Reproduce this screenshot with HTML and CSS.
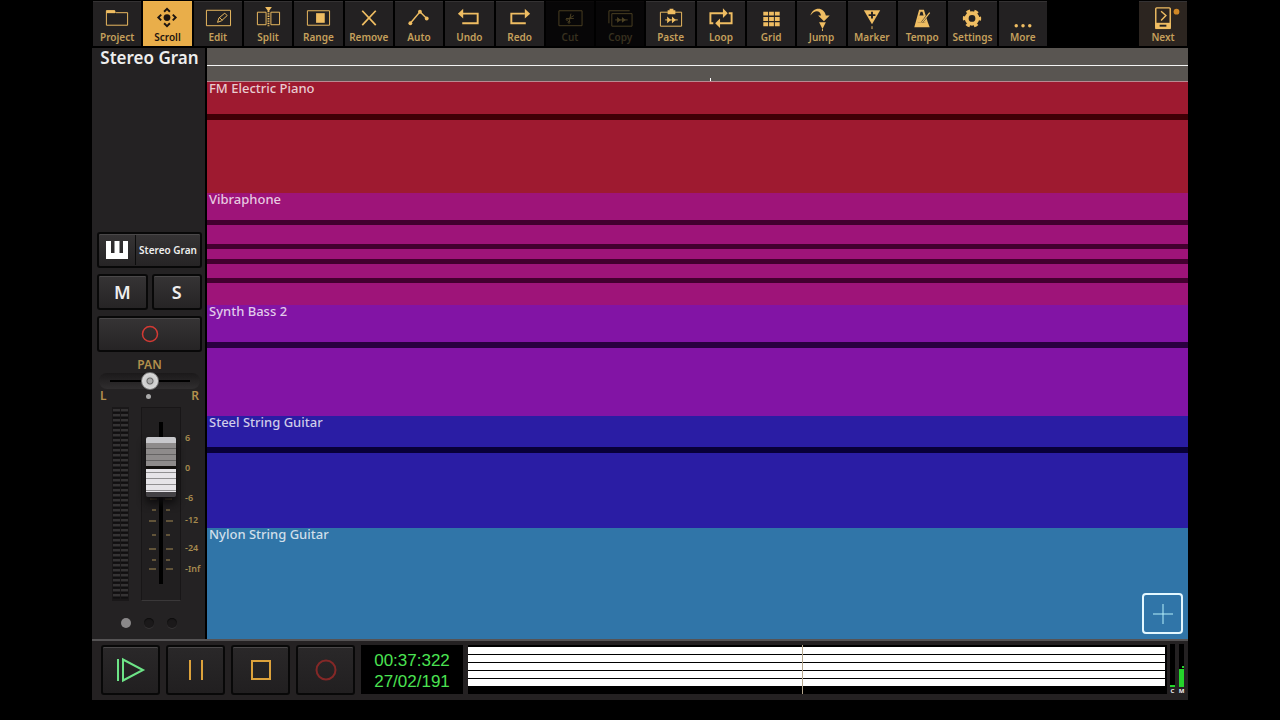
FILE: index.html
```html
<!DOCTYPE html>
<html lang="en">
<head>
	<meta charset="UTF-8">
	<meta name="viewport" content="width=device-width, initial-scale=1.0">
	<title>Audio Sequencer</title>
	<link rel="stylesheet" href="styles.css">
</head>
<body>
	<div class="app">
		<div class="toolbar">
			<div class="tools">
				<button class="tool"><svg viewBox="0 0 28 28"><path d="M3 22V7h8l2 2h12v13z"/><path d="M3 8h9" stroke-width="3"/></svg>Project</button>
				<button class="tool active"><svg viewBox="0 0 28 28"><circle class="fill" cx="14" cy="14" r="3.500"/><path d="M11 8l3-3 3 3M11 20l3 3 3-3M8 11l-3 3 3 3M20 11l3 3-3 3" stroke-width="2"/></svg>Scroll</button>
				<button class="tool"><svg viewBox="0 0 28 28"><path d="M2 6.500h25v16H2z"/><path d="M13.500 19l1.500-4.500 6-5 2.500 2.500-6 5.500zM15.500 14l3 3"/></svg>Edit</button>
				<button class="tool"><svg viewBox="0 0 28 28"><path d="M12 8.500H3v13h9zM17 8.500h9v13h-9z"/><path d="M14.500 7v16" stroke-width="2" stroke-dasharray="1.500 1"/><path class="fill" d="M11 3h7l-3.500 5z"/></svg>Split</button>
				<button class="tool"><svg viewBox="0 0 28 28"><path d="M3 7h23v15H3z"/><path class="fill" d="M12 9.500h9v10h-9z"/></svg>Range</button>
				<button class="tool"><svg viewBox="0 0 28 28"><path d="M7 7l14 15M21 7L7 22" stroke-width="1.800"/></svg>Remove</button>
				<button class="tool"><svg viewBox="0 0 28 28"><path d="M5 20L15 8l7 7" stroke-width="1.500"/><circle class="fill" cx="5" cy="20" r="2"/><circle class="fill" cx="15" cy="8" r="2"/><circle class="fill" cx="22" cy="15" r="2"/></svg>Auto</button>
				<button class="tool"><svg viewBox="0 0 28 28"><path d="M7 10h16v10H7" stroke-width="2"/><path class="fill" d="M2.500 10L8 5v10z"/></svg>Undo</button>
				<button class="tool"><svg viewBox="0 0 28 28"><path d="M19 10H5v10h15" stroke-width="2"/><path class="fill" d="M24.500 10L19 5v10z"/></svg>Redo</button>
				<button class="tool" disabled><svg viewBox="0 0 28 28"><path d="M2.500 7h24v15.500h-24z"/><path d="M10 15h8M15 10l-2 9M13 15l5-3"/><circle cx="11" cy="16" r="1"/><circle cx="13" cy="19" r="1"/></svg>Cut</button>
				<button class="tool" disabled><svg viewBox="0 0 28 28"><path d="M2.500 20V7H24M5.500 10h21v13h-21z"/><path d="M9 16.500h13"/><path class="fill" d="M11 13.500l4 3-4 3zM16 13.500l4 3-4 3z"/></svg>Copy</button>
				<button class="tool"><svg viewBox="0 0 28 28"><path d="M3 8.500h22v14.500H3z"/><path class="fill" d="M10.500 6.500h2V5h4v1.500h2v4h-8zM10 13l4 3.500-4 3.500zM15 13l4 3.500-4 3.500z"/><path d="M8 16.500h13"/></svg>Paste</button>
				<button class="tool"><svg viewBox="0 0 28 28"><path d="M6 20H3V9.500h14M22 9.500h3V20H12" stroke-width="2"/><path class="fill" d="M16 4.500l5 5-5 5zM13 15l-5 5 5 5z"/></svg>Loop</button>
				<button class="tool"><svg viewBox="0 0 28 28"><path class="fill" d="M6 8h5v4H6zM12 8h5v4h-5zM18 8h5v4h-5zM6 13.500h5v4H6zM12 13.500h5v4h-5zM18 13.500h5v4h-5zM6 19h5v4H6zM12 19h5v4h-5zM18 19h5v4h-5z"/></svg>Grid</button>
				<button class="tool"><svg viewBox="0 0 28 28"><path class="fill" d="M2 12C4 3 16 2 18 12h4l-6 6-6-6h3C12 6 6 6 2 12zM11 19h7l-3.500 7z"/><path d="M14.500 26v2"/></svg>Jump</button>
				<button class="tool"><svg viewBox="0 0 28 28"><path class="fill" d="M5.500 6.500h17L14 21z"/><path class="hole" d="M14 8v7M10.500 11.500h7"/><path d="M14 23v3"/></svg>Marker</button>
				<button class="tool"><svg viewBox="0 0 28 28"><path class="fill" fill-rule="evenodd" d="M11 6h5l4 13 2 5H6zM12.500 8L9.500 19h8L14.500 8z"/><path class="fill" d="M11 12h5l2 7H9z"/><path class="hole" d="M14 19l7-9"/><path d="M14 19l8-10" stroke-width="1.300"/></svg>Tempo</button>
				<button class="tool"><svg viewBox="0 0 28 28"><circle cx="14" cy="15" r="5.500" stroke-width="4"/><circle cx="14" cy="15" r="8" stroke-width="3" stroke-dasharray="4 4.380" stroke-dashoffset="2"/></svg>Settings</button>
				<button class="tool"><svg viewBox="0 0 28 28"><circle class="fill" cx="7" cy="22.500" r="1.800"/><circle class="fill" cx="14" cy="22.500" r="1.800"/><circle class="fill" cx="21" cy="22.500" r="1.800"/></svg>More</button>
			</div>
			<button class="tool next"><svg viewBox="0 0 28 28"><rect x="6.500" y="4" width="15" height="21" rx="1" stroke-width="1.500"/><path class="fill" d="M6 19.500h16V26H6z"/><path class="hole" d="M10.500 22.500h7"/><path d="M12 7.500l5 4.500-5 5" stroke-width="1.500"/><circle class="badge" cx="28" cy="8" r="3"/></svg>Next</button>
		</div>

		<div class="main">
			<div class="channel">
				<h1>Stereo Gran</h1>
				<div class="strip">
					<button class="btn instrument">
						<svg viewBox="0 0 22 18"><path d="M0 0h5v12h3.500V0h5v12H17V0h5v18H0z"/></svg>
						<span>Stereo Gran</span>
					</button>
					<div class="mute-solo">
						<button class="btn">M</button>
						<button class="btn">S</button>
					</div>
					<button class="btn" aria-label="Arm recording"><svg class="arm" viewBox="0 0 18 18"><circle cx="9" cy="9" r="7.500"/></svg></button>
				</div>
				<div class="pan">
					<label for="pan">PAN</label>
					<input type="range" id="pan" min="-50" max="50" value="0">
					<div class="pan-ends"><span>L</span><i></i><span>R</span></div>
				</div>
				<div class="levels">
					<div class="meter"><i></i><i></i></div>
					<div class="fader">
						<!-- tick marks -->
						<svg viewBox="0 0 40 194"><path d="M9 30h7M24 30h7M5 61h30M9 91h7M24 91h7M11 102h4M25 102h4M8 113h7M25 113h7M11 127h4M25 127h4M8 141h7M25 141h7M11 152h4M25 152h4M8 161h7M25 161h7"/></svg>
						<input type="range" id="volume" aria-label="Volume" min="0" max="100" value="85">
					</div>
					<svg class="scale" viewBox="0 0 20 194"><text x="1" y="34">6</text><text x="1" y="64">0</text><text x="1" y="94">-6</text><text x="1" y="116">-12</text><text x="1" y="144">-24</text><text x="1" y="165">-Inf</text></svg>
				</div>
				<div class="pages"><i class="on"></i><i></i><i></i></div>
			</div>

			<div class="arrange">
				<div class="ruler">
					<div class="ruler-top"></div>
					<div class="ruler-bottom"><i style="left: 51.300%"></i></div>
				</div>
				<div class="track red">FM Electric Piano
					<i style="top: 29%"></i>
				</div>
				<div class="track pink">Vibraphone
					<i style="top: 24%"></i>
					<i style="top: 45%"></i>
					<i style="top: 59%"></i>
					<i style="top: 76%"></i>
				</div>
				<div class="track purple">Synth Bass 2
					<i style="top: 33%"></i>
				</div>
				<div class="track indigo">Steel String Guitar
					<i style="top: 28%"></i>
				</div>
				<div class="track blue">Nylon String Guitar</div>
				<button class="add" aria-label="Add track"><svg viewBox="0 0 20 20"><path d="M10 0v20M0 10h20"/></svg></button>
			</div>
		</div>

		<div class="transport">
			<button class="btn play" aria-label="Play"><svg viewBox="0 0 30 30"><path d="M2 4v22M7 4.500v21L27 15z"/></svg></button>
			<button class="btn pause" aria-label="Pause"><svg viewBox="0 0 30 30"><path d="M9 5v20M21 5v20"/></svg></button>
			<button class="btn stop" aria-label="Stop"><svg viewBox="0 0 30 30"><path d="M6 6h18v18H6z"/></svg></button>
			<button class="btn rec" aria-label="Record"><svg viewBox="0 0 30 30"><circle cx="15" cy="15" r="9.500"/></svg></button>
			<div class="time">
				<div>00:37:322</div>
				<div>27/02/191</div>
			</div>
			<div class="overview">
				<div class="lane"></div>
				<div class="lane"></div>
				<div class="lane"></div>
				<div class="lane"></div>
				<div class="lane"></div>
				<i class="playhead" style="left: 47.800%"></i>
			</div>
			<div class="master">
				<div><div class="bar"><i style="height: 5%"></i></div>C</div>
				<div><div class="bar peak"><i style="height: 43%"></i></div>M</div>
			</div>
		</div>
	</div>
</body>
</html>
```

FILE: styles.css
```css
* {
	margin: 0;
	padding: 0;
	box-sizing: border-box;
}

body {
	background-color: #000000;
	color: #eeeeee;
	font-family: "Noto Sans", "Open Sans", sans-serif;
}

button {
	border: none;
	color: inherit;
	font-family: inherit;
	cursor: pointer;
}

svg {
	display: block;
	fill: none;
	stroke: currentColor;
}

.app {
	display: flex;
	flex-direction: column;
	min-height: calc(100vh - 20px);
	margin: 0 92px 20px;
}

/* Toolbar */
.toolbar {
	display: flex;
	justify-content: space-between;
	height: 48px;
	padding: 1px 1px 2px;
}

.tools {
	display: flex;
	gap: 2px;
	flex: 0 1 954px;
}

.tool {
	display: flex;
	flex: 1;
	flex-direction: column;
	align-items: center;
	min-width: 0;
	padding-top: 2px;
	border-top: 1px solid #343233;
	background-color: #232122;
	color: #c5a05c;
	font-size: 10px;
	font-weight: 600;
	line-height: 12px;
}

.tool svg {
	width: 28px;
	height: 27px;
	overflow: visible;
	color: #efbd62;
}

.tool .fill {
	fill: currentColor;
	stroke: none;
}

.tool .hole {
	stroke: #232122;
	stroke-width: 2;
}

.tool.active {
	border-color: #efb44f;
	background-color: #e9ae4a;
	color: #1d1510;
}

.tool.active svg {
	color: #1d1510;
}

.tool:disabled {
	border-color: #0c0a0b;
	background-color: #070607;
	color: #37301f;
}

.tool:disabled svg {
	color: #4b4022;
}

.tool.next {
	flex: 0 0 48px;
	background-color: #2c2520;
}

.tool .badge {
	fill: #d18826;
	stroke: none;
}

.main {
	display: flex;
	flex: 1;
}

/* Channel strip */
.channel {
	display: flex;
	flex-direction: column;
	width: 115px;
	padding: 0 3px 0 5px;
	border-right: 2px solid #000000;
	background-color: #242223;
}

.channel h1 {
	flex: 1;
	font-size: 17px;
	font-weight: 600;
	line-height: 20px;
	text-align: center;
	white-space: nowrap;
}

.strip {
	display: flex;
	flex-direction: column;
	gap: 6px;
}

.btn {
	display: flex;
	align-items: center;
	justify-content: center;
	height: 36px;
	border: 2px solid #080808;
	border-radius: 3px;
	background-image: linear-gradient(#363435, #262425);
	box-shadow: inset 0 1px 0 #4a4849;
	font-size: 18px;
	font-weight: 600;
}

.instrument svg {
	flex: none;
	width: 36px;
	height: 18px;
	fill: #ffffff;
	stroke: none;
}

.instrument span {
	flex: 1;
	border-left: 1px solid #0c0c0c;
	font-size: 10px;
	line-height: 30px;
	white-space: nowrap;
}

.mute-solo {
	display: flex;
	gap: 4px;
}

.mute-solo .btn {
	flex: 1;
}

.arm {
	width: 18px;
	color: #d33a34;
	stroke-width: 1.5;
}

.pan {
	padding-top: 4px;
	color: #b28f4c;
	font-size: 12px;
	font-weight: 600;
	text-align: center;
}

.pan label {
	display: block;
	line-height: 17px;
}

.pan input {
	display: block;
	width: 101px;
	height: 16px;
	margin: 0 2px;
	border-radius: 8px;
	background: linear-gradient(#000000, #000000) center / 80px 2px no-repeat, linear-gradient(#1b191a, #302e2f);
	appearance: none;
}

.pan input::-webkit-slider-thumb {
	width: 18px;
	height: 18px;
	border: 1px solid #777777;
	border-radius: 50%;
	background: radial-gradient(circle, #aaaaaa 2px, #666666 3px, #cccccc 4px, #dddddd 9px);
	appearance: none;
}

.pan-ends {
	display: flex;
	align-items: center;
	justify-content: space-between;
	padding: 0 3px;
	line-height: 14px;
}

.pan-ends i {
	width: 5px;
	height: 5px;
	border-radius: 50%;
	background-color: #aaaaaa;
}

.levels {
	display: flex;
	height: 194px;
	margin-top: 4px;
	padding-left: 15px;
}

.meter {
	display: flex;
	flex: none;
	gap: 1px;
	width: 17px;
	margin-right: 12px;
	padding: 2px 1px;
	background-color: #1a1819;
}

.meter i {
	flex: 1;
	background: repeating-linear-gradient(#353334 0, #353334 2px, #0e0d0e 3px, #161415 5px);
}

.fader {
	position: relative;
	flex: none;
	width: 40px;
	padding: 14px 5px;
	border: 1px solid #181617;
	border-bottom-color: #3a3839;
	background-color: #211f20;
}

.fader svg {
	position: absolute;
	top: 0;
	left: -1px;
	width: 40px;
	height: 194px;
	stroke: #a48a52;
}

.fader input {
	position: relative;
	width: 28px;
	height: 162px;
	background: linear-gradient(#000000, #000000) center / 4px 162px no-repeat;
	appearance: none;
	direction: rtl;
	writing-mode: vertical-lr;
}

.fader input::-webkit-slider-thumb {
	width: 30px;
	height: 60px;
	border-radius: 2px;
	background:
		linear-gradient(#c8c8cc 0, #c8c8cc 6px, transparent 6px, transparent 29px, #141210 29px, #141210 32px, transparent 32px, transparent 55px, #434144 55px),
		repeating-linear-gradient(transparent 0, transparent 5px, rgba(60, 60, 60, .5) 5px, rgba(60, 60, 60, .5) 6px),
		linear-gradient(#8e8b8b 50%, #e6e4e8 50%);
	box-shadow: 0 6px 8px #0c0b0c;
	appearance: none;
}

.scale {
	flex: none;
	width: 20px;
	height: 194px;
	margin-left: 3px;
	overflow: visible;
	fill: #a78b4f;
	stroke: none;
	font-size: 9px;
	font-weight: 600;
}

.pages {
	display: flex;
	justify-content: center;
	gap: 13px;
	padding: 17px 2px 11px 0;
}

.pages i {
	width: 10px;
	height: 10px;
	border-radius: 50%;
	background-color: #1b191a;
	box-shadow: inset 0 1px 1px #0c0c0c, 0 1px 0 #353334;
}

.pages .on {
	background-color: #8a8889;
	box-shadow: none;
}

/* Arrangement */
.arrange {
	position: relative;
	display: flex;
	flex: 1;
	flex-direction: column;
}

.ruler {
	background-color: #595551;
	border-bottom: 1px solid #b98a92;
}

.ruler-top {
	height: 18px;
	border-bottom: 1px solid #f4f4f4;
}

.ruler-bottom {
	position: relative;
	height: 15px;
}

.ruler-bottom i {
	position: absolute;
	bottom: 0;
	width: 1px;
	height: 3px;
	background-color: #ffffff;
}

.track {
	position: relative;
	flex: 1;
	padding-left: 2px;
	color: rgba(255, 255, 255, .78);
	font-size: 13px;
	font-weight: 500;
	line-height: 12px;
}

.track i {
	position: absolute;
	left: 0;
	width: 100%;
	height: 6px;
}

.red {
	background-color: #9e1a30;
}

.red i {
	background-color: #3f0006;
}

.pink {
	background-color: #9e1479;
}

.pink i {
	height: 5px;
	background-color: #43002f;
}

.purple {
	background-color: #8214a5;
}

.purple i {
	background-color: #2a0040;
}

.indigo {
	background-color: #2a1da4;
}

.indigo i {
	background-color: #080038;
}

.blue {
	background-color: #3075a8;
}

.add {
	position: absolute;
	right: 5px;
	bottom: 5px;
	display: flex;
	align-items: center;
	justify-content: center;
	width: 41px;
	height: 41px;
	border: 2px solid #e4f8ff;
	border-radius: 4px;
	background-color: transparent;
	color: #b4f0fa;
}

.add svg {
	width: 20px;
}

/* Transport */
.transport {
	display: flex;
	align-items: center;
	height: 61px;
	padding: 0 3px 2px 9px;
	border-top: 2px solid #555354;
	background-color: #242122;
}

.transport .btn {
	flex: none;
	width: 59px;
	height: 50px;
	margin-right: 6px;
	background-image: linear-gradient(#2a2829, #211f20);
}

.transport .btn svg {
	width: 30px;
	height: 30px;
	stroke-width: 2;
}

.play {
	color: #6de487;
}

.pause,
.stop {
	color: #dda23b;
}

.rec {
	color: #842827;
}

.time {
	flex: none;
	width: 102px;
	height: 49px;
	margin-right: 5px;
	padding: 5px 0;
	background-color: #000000;
	color: #4be352;
	font-family: "Liberation Sans", Arial, sans-serif;
	font-size: 17px;
	line-height: 21px;
	text-align: center;
}

.overview {
	position: relative;
	display: flex;
	flex: 1;
	flex-direction: column;
	gap: 1px;
	height: 49px;
	padding: 2px 2px 0 0;
	background-color: #000000;
}

.lane {
	height: 7px;
	background-color: #ffffff;
}

.playhead {
	position: absolute;
	top: 0;
	width: 1px;
	height: 100%;
	background-color: #b5a68d;
}

.master {
	display: flex;
	gap: 2px;
	margin-left: 2px;
	font-size: 6px;
	font-weight: 700;
	line-height: 8px;
	text-align: center;
}

.master > div {
	width: 7px;
}

.bar {
	display: flex;
	flex-direction: column;
	justify-content: flex-end;
	width: 5px;
	height: 43px;
	margin: 0 auto;
	background-color: #000000;
}

.bar i {
	background-color: #25d42b;
}

.peak::before {
	content: "";
	align-self: flex-end;
	width: 2px;
	height: 2px;
	margin-bottom: 1px;
	background-color: #25d42b;
}
```
